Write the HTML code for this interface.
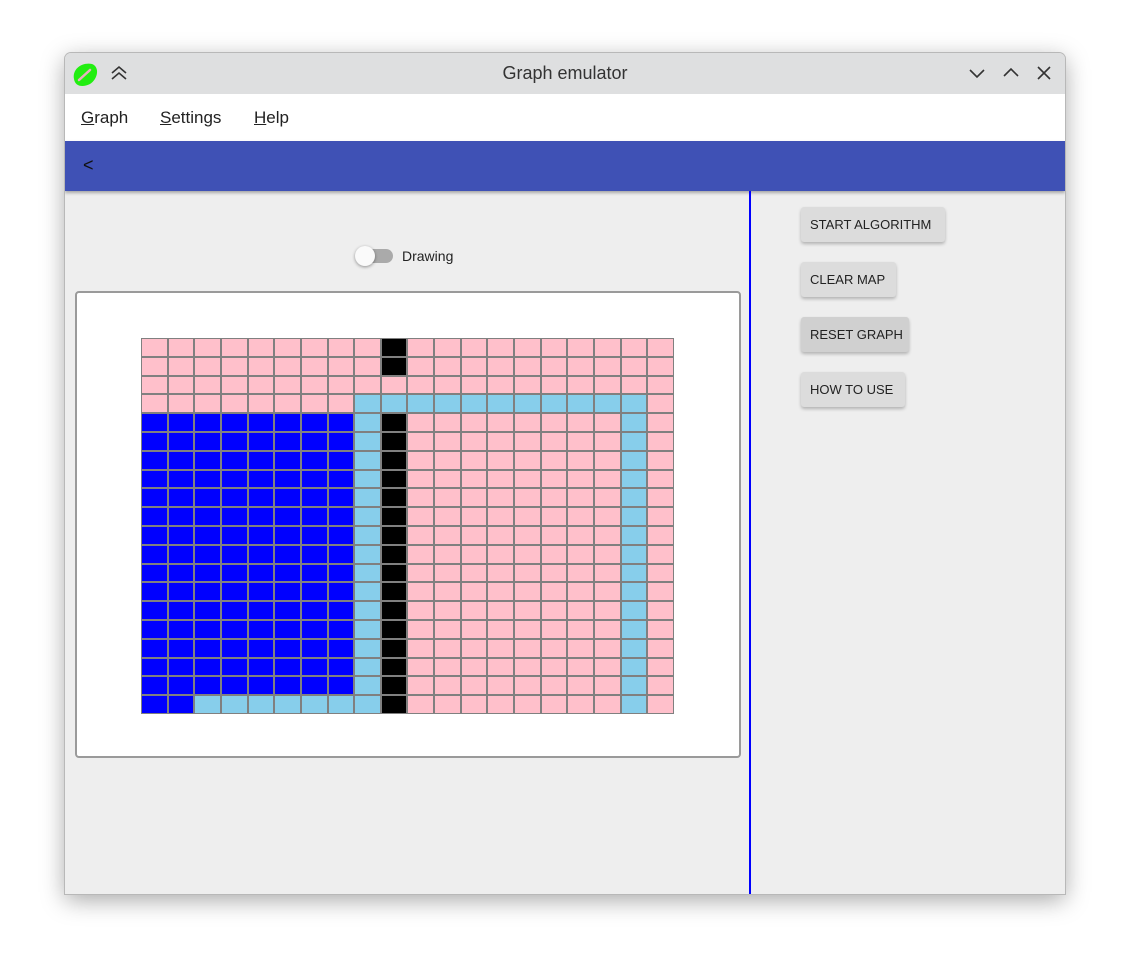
<!DOCTYPE html>
<html><head><meta charset="utf-8"><style>
*{box-sizing:border-box;margin:0;padding:0}
body{width:1130px;height:971px;background:#fff;font-family:"Liberation Sans",sans-serif;position:relative;overflow:hidden}
.win{position:absolute;left:65px;top:53px;width:1000px;height:841px;background:#eeeeee;border-radius:6px 6px 0 0;box-shadow:0 0 0 1px #b8b8b8,0 6px 24px rgba(0,0,0,.35);overflow:hidden}
.title{position:absolute;left:0;top:0;width:100%;height:41px;background:#dedfe0}
.title .t{position:absolute;left:0;right:0;top:10px;text-align:center;font-size:18px;color:#333}
.menu{position:absolute;top:41px;left:0;width:100%;height:47px;background:#fff;font-size:17px;color:#222}
.menu span{position:absolute;top:14px}
.menu u{text-decoration:underline}
.bar{position:absolute;top:88px;left:0;width:100%;height:50px;background:#3f51b5;box-shadow:0 2px 3px rgba(0,0,0,.3)}
.bar span{position:absolute;left:18px;top:14px;font-size:18px;color:#111}
.vline{position:absolute;left:684px;top:138px;width:2px;height:703px;background:#0000ff}
.card{position:absolute;left:10px;top:238px;width:666px;height:467px;background:#fff;border:2px solid #9a9a9a;border-radius:4px}
.grid{position:absolute;left:64px;top:45px;width:533px;height:376px;background:#808080;display:grid;grid-template-columns:repeat(20,1fr);grid-template-rows:repeat(20,1fr);gap:2px;padding:1px}
.btn{position:absolute;left:736px;height:35px;background:#dcdcdc;box-shadow:0 2px 3px rgba(0,0,0,.25);border-radius:3px;font-size:13px;color:#222;line-height:35px;padding-left:9px;white-space:nowrap}
.tog{position:absolute;left:290px;top:189px}
</style></head><body>
<div class="win">
 <div class="title">
  <svg style="position:absolute;left:5px;top:6px" width="30" height="30"><path d="M4 20 C2 10 12 3 22 5 C30 8 28 20 20 25 C12 29 5 27 4 20Z" fill="#22ee11"/><path d="M9 21 L20 11" stroke="#e8b0c0" stroke-width="2.5" stroke-linecap="round"/></svg>
  <svg style="position:absolute;left:44px;top:11px" width="20" height="18" fill="none" stroke="#333" stroke-width="1.6"><path d="M3 9 L10 3 L17 9 M3 15 L10 9 L17 15"/></svg>
  <div class="t">Graph emulator</div>
  <svg style="position:absolute;left:902px;top:12px" width="20" height="16" fill="none" stroke="#333" stroke-width="1.6"><path d="M3 5 L10 12 L17 5"/></svg>
  <svg style="position:absolute;left:936px;top:12px" width="20" height="16" fill="none" stroke="#333" stroke-width="1.6"><path d="M3 11 L10 4 L17 11"/></svg>
  <svg style="position:absolute;left:970px;top:11px" width="18" height="18" fill="none" stroke="#333" stroke-width="1.6"><path d="M3 3 L15 15 M15 3 L3 15"/></svg>
 </div>
 <div class="menu"><span style="left:16px"><u>G</u>raph</span><span style="left:95px"><u>S</u>ettings</span><span style="left:189px"><u>H</u>elp</span></div>
 <div class="bar"><span>&lt;</span></div>
 <div class="tog">
  <div style="position:absolute;left:4px;top:7px;width:34px;height:14px;border-radius:7px;background:#aaa"></div>
  <div style="position:absolute;left:0;top:4px;width:20px;height:20px;border-radius:50%;background:#fafafa;box-shadow:0 1px 3px rgba(0,0,0,.4)"></div>
  <div style="position:absolute;left:47px;top:6px;font-size:14px;color:#222">Drawing</div>
 </div>
 <div class="card"><div class="grid" id="g"></div></div>
 <div class="vline"></div>
 <div class="btn" style="top:154px;width:144px">START ALGORITHM</div>
 <div class="btn" style="top:209px;width:95px">CLEAR MAP</div>
 <div class="btn" style="top:264px;width:108px;background:#d0d0d0">RESET GRAPH</div>
 <div class="btn" style="top:319px;width:104px">HOW TO USE</div>
</div>
<script>
var g=document.getElementById('g'),h='';
for(var r=0;r<20;r++)for(var c=0;c<20;c++){
 var col='#ffc0cb';
 if(c==9&&(r<2||r>=4))col='#000';
 else if(r==3&&c>=8&&c<=18)col='#87ceeb';
 else if(r>=3&&(c==8||c==18))col='#87ceeb';
 else if(r>=4&&r<=18&&c<=7)col='#0000ff';
 else if(r==19&&c<=1)col='#0000ff';
 else if(r==19&&c>=2&&c<=8)col='#87ceeb';
 h+='<div style="background:'+col+'"></div>';
}
g.innerHTML=h;
</script>
</body></html>
